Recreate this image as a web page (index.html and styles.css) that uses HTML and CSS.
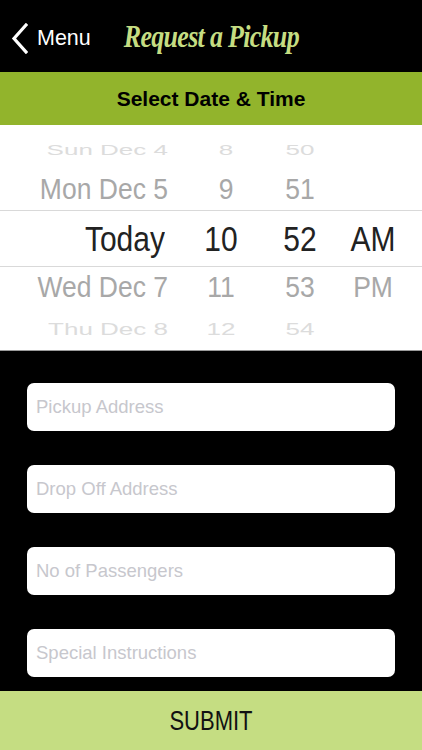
FILE: index.html
```html
<!DOCTYPE html>
<html lang="en">
<head>
  <meta charset="UTF-8">
  <meta name="viewport" content="width=device-width, initial-scale=1.0">
  <title>Request a Pickup</title>
  <link rel="stylesheet" href="styles.css">
</head>
<body>
  <div class="header">
    <a class="back" href="#">
      <svg width="17" height="31" viewBox="0 0 17 31">
        <path d="M15 2 L3 15.5 L15 29" fill="none" stroke="#fff" stroke-width="3.2" stroke-linecap="square"/>
      </svg>
      <span>Menu</span>
    </a>
    <div class="title">Request a Pickup</div>
  </div>

  <div class="band">Select Date &amp; Time</div>

  <div class="picker">
    <div class="row far top">
      <div class="date">Sun Dec 4</div><div class="hr">8</div><div>50</div><div></div>
    </div>
    <div class="row near">
      <div class="date">Mon Dec 5</div><div class="hr">9</div><div>51</div><div></div>
    </div>
    <div class="row selected">
      <div class="date">Today</div><div>10</div><div>52</div><div>AM</div>
    </div>
    <div class="row near">
      <div class="date">Wed Dec 7</div><div>11</div><div>53</div><div>PM</div>
    </div>
    <div class="row far bottom">
      <div class="date">Thu Dec 8</div><div>12</div><div>54</div><div></div>
    </div>
  </div>

  <div class="form">
    <input type="text" placeholder="Pickup Address">
    <input type="text" placeholder="Drop Off Address">
    <input type="text" placeholder="No of Passengers">
    <input type="text" placeholder="Special Instructions">
  </div>

  <button class="submit"><span>SUBMIT</span></button>
</body>
</html>
```

FILE: styles.css
```css
body {
  margin: 0;
  background-color: #000;
  font-family: "Liberation Sans", Arial, sans-serif;
  width: 422px;
  height: 750px;
  overflow: hidden;
}
.header {
  height: 72px;
  display: flex;
  align-items: center;
  background-color: #000;
}
.back {
  display: flex;
  align-items: center;
  color: #fff;
  text-decoration: none;
  font-size: 21.5px;
  padding-left: 11px;
  margin-top: 4px;
}
.back svg {
  margin-right: 9px;
}
.title {
  margin-left: 33px;
  margin-top: 2px;
  font-family: "Liberation Serif", "Times New Roman", serif;
  font-style: italic;
  font-weight: bold;
  font-size: 26px;
  letter-spacing: -0.7px;
  color: #c5dd82;
  transform: scaleY(1.22);
}
.band {
  height: 53px;
  line-height: 53px;
  background-color: #92b42c;
  text-align: center;
  font-weight: bold;
  font-size: 21px;
  color: #000;
}
.picker {
  height: 226px;
  background-color: #fff;
  padding-top: 6px;
  box-sizing: border-box;
  overflow: hidden;
  border-bottom: 1px solid #9a9a9a;
  color: #222;
}
.row {
  display: grid;
  grid-template-columns: 168px 106px 52px 94px;
  text-align: center;
  align-items: center;
}
.row .date {
  text-align: right;
}
.row.far {
  height: 38px;
  font-size: 26px;
  color: #dcdcdc;
  transform: scaleY(0.55);
}
.row.far.bottom {
  transform: scaleY(0.62);
  transform-origin: center 70%;
}
.row.near {
  height: 41px;
  font-size: 26.5px;
  color: #a8a8a8;
}
.row.near > div {
  transform: scaleY(1.08);
}
.row .hr {
  padding-left: 10px;
}
.selected {
  height: 55px;
  border-top: 1px solid #d9d9d9;
  border-bottom: 1px solid #d9d9d9;
  font-size: 30px;
  color: #222;
}
.selected > div {
  transform: scaleY(1.17);
}
.selected .date {
  padding-right: 3px;
}
.form {
  display: flex;
  flex-direction: column;
  gap: 34px;
  padding: 32px 27px 14px;
}
.form input {
  height: 48px;
  box-sizing: border-box;
  border: none;
  border-radius: 7px;
  background-color: #fff;
  padding: 0 9px;
  font-family: "Liberation Sans", Arial, sans-serif;
  font-size: 18.5px;
  outline: none;
}
.form input::placeholder {
  color: #c7c7cd;
}
.submit {
  display: block;
  width: 100%;
  height: 59px;
  border: none;
  background-color: #c5dd82;
  font-family: "Liberation Sans", Arial, sans-serif;
  font-size: 22px;
  color: #111;
  padding: 0;
}
.submit span {
  display: inline-block;
  transform: scaleY(1.22);
}
```
